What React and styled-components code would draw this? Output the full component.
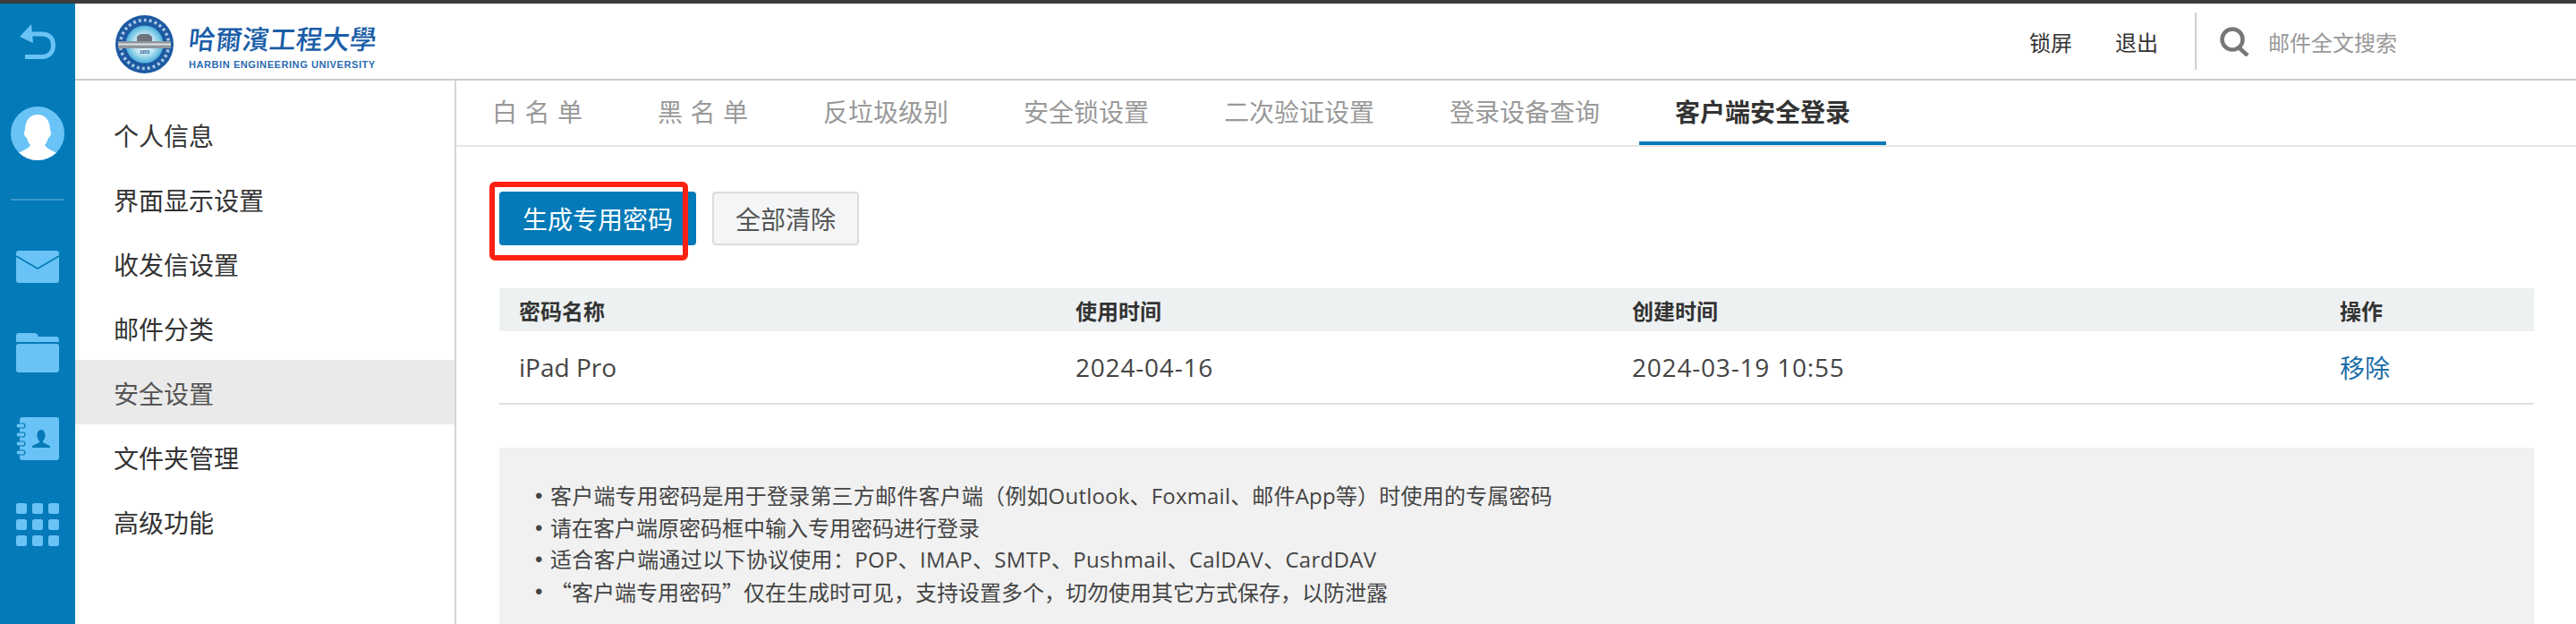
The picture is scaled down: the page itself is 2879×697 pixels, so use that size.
import React from 'react';
import styled, { createGlobalStyle } from 'styled-components';

const GlobalStyle = createGlobalStyle`
html, body { margin: 0; padding: 0; background: #fff; overflow: hidden; }
body { font-family: "Open Sans", "Noto Sans CJK SC", sans-serif; }
* { box-sizing: border-box; }
`;

const Page = styled.div`
height: 697px;
width: 2879px;
border-top: 4px solid #3c3c3c;
display: flex;
overflow: hidden;
`;

const Rail = styled.div`
width: 84px;
background: #047ab8;
flex: none;
display: flex;
flex-direction: column;
align-items: center;
`;

const Avatar = styled.div`
margin-top: 53px;
width: 60px;
height: 60px;
border-radius: 50%;
overflow: hidden;
line-height: 0;
`;

const RailLine = styled.div`
margin-top: 43px;
width: 60px;
height: 2px;
background: #3d97c9;
`;

const RailIcon = styled.div`
margin-top: ${(p) => p.$top}px;
line-height: 0;
`;

const Main = styled.div`
flex: 1;
display: flex;
flex-direction: column;
min-width: 0;
`;

const Header = styled.div`
height: 86px;
flex: none;
border-bottom: 2px solid #cccccc;
display: flex;
align-items: center;
padding-left: 45px;
`;

const Logo = styled.div`
display: flex;
align-items: center;
gap: 17px;
flex: 1;
margin-top: 6px;
line-height: 0;
`;

const LogoText = styled.div`
display: flex;
flex-direction: column;
gap: 2px;
color: #1a5da8;
`;

const LogoName = styled.div`
font-family: "Noto Sans CJK TC", sans-serif;
font-size: 30px;
font-weight: 500;
line-height: 44px;
white-space: nowrap;
transform: skewX(-6deg);
`;

const LogoSub = styled.div`
font-family: "Liberation Sans", sans-serif;
font-weight: 700;
font-size: 11px;
line-height: 12px;
letter-spacing: 0.58px;
white-space: nowrap;
color: #2a6ab0;
`;

const HeaderLinks = styled.div`
display: flex;
gap: 48px;
margin-right: 41px;
`;

const HeaderLink = styled.div`
font-family: "Noto Sans CJK SC", sans-serif;
font-size: 24px;
color: #333;
`;

const SearchBox = styled.div`
height: 64px;
width: 426px;
border-left: 2px solid #ccd0d3;
display: flex;
align-items: center;
padding-left: 26px;
gap: 20px;
font-family: "Noto Sans CJK SC", sans-serif;
font-size: 24px;
color: #999;
`;

const Content = styled.div`
flex: 1;
display: flex;
min-height: 0;
`;

const Menu = styled.div`
width: 426px;
flex: none;
border-right: 2px solid #d6d6d6;
padding-top: 24px;
`;

const MenuItem = styled.div`
height: 72px;
padding: 2px 0 0 43px;
display: flex;
align-items: center;
font-family: "Noto Sans CJK SC", sans-serif;
font-size: 28px;
color: ${(p) => (p.$active ? '#555' : '#333')};
background: ${(p) => (p.$active ? '#eaeaea' : 'transparent')};
`;

const Panel = styled.div`
flex: 1;
min-width: 0;
`;

const Tabs = styled.div`
height: 74px;
border-bottom: 2px solid #e6e6e6;
display: flex;
gap: 4px;
`;

const Tab = styled.div`
height: 72px;
padding: 0 40px;
margin-right: ${(p) => -(p.$spread || 0)}px;
display: flex;
align-items: center;
font-family: "Noto Sans CJK SC", sans-serif;
font-size: 28px;
letter-spacing: ${(p) => p.$spread || 0}px;
font-weight: ${(p) => (p.$active ? 700 : 400)};
color: ${(p) => (p.$active ? '#333' : '#999')};
border-bottom: 4px solid ${(p) => (p.$active ? '#047ab8' : 'transparent')};
white-space: nowrap;
`;

const Body = styled.div`
padding: 50px 47px 0 48px;
`;

const Actions = styled.div`
display: flex;
gap: 18px;
`;

const PrimaryWrap = styled.div`
position: relative;
`;

const PrimaryButton = styled.div`
width: 220px;
height: 60px;
background: #047ab8;
border-radius: 4px;
color: #fff;
font-family: "Noto Sans CJK SC", sans-serif;
font-size: 28px;
display: flex;
align-items: center;
justify-content: center;
`;

const RedBox = styled.div`
position: absolute;
left: -11px;
top: -11px;
width: 222px;
height: 88px;
border: 6px solid #ff2014;
border-radius: 6px;
`;

const SecondaryButton = styled.div`
width: 164px;
height: 60px;
background: #f4f5f7;
border: 2px solid #dcdcdc;
border-radius: 4px;
color: #555;
font-family: "Noto Sans CJK SC", sans-serif;
font-size: 28px;
display: flex;
align-items: center;
justify-content: center;
`;

const Table = styled.div`
margin-top: 48px;
`;

const Row = styled.div`
display: grid;
grid-template-columns: 622px 622px 791px 1fr;
align-items: center;
padding-left: 22px;
height: ${(p) => p.$h}px;
background: ${(p) => p.$bg || 'transparent'};
border-bottom: ${(p) => (p.$line ? '2px solid #dcdfe1' : 'none')};
`;

const HeadCell = styled.div`
font-family: "Noto Sans CJK SC", sans-serif;
font-size: 24px;
font-weight: 700;
color: #333;
`;

const Cell = styled.div`
font-family: "Open Sans", "Noto Sans CJK SC", sans-serif;
font-size: 28px;
letter-spacing: ${(p) => p.$spread || 0}px;
color: ${(p) => p.$color || '#444'};
`;

const Notice = styled.div`
margin-top: 48px;
height: 197px;
background: #f1f1f1;
padding: 36px 0 0 40px;
`;

const NoticeLine = styled.div`
display: flex;
font-family: ${(p) => (p.$cjk ? '"Noto Sans CJK SC"' : '"Open Sans", "Noto Sans CJK SC"')}, sans-serif;
font-size: 24px;
line-height: 35.5px;
letter-spacing: ${(p) => p.$spread || 0}px;
color: #444;
white-space: nowrap;
`;

const Bullet = styled.span`
width: 17px;
flex: none;
font-family: "Liberation Sans", sans-serif;
`;

const railBlue = '#6ac3f6';
const railBack = '#047ab8';

const BackIcon = () => (
  <svg width="40" height="39" viewBox="0 0 40 39">
    <path d="M13 11 H25 C33 11 37.5 16 37.5 23.5 C37.5 31 33 36.5 25 36.5 H6" fill="none" stroke={railBlue} strokeWidth="5" />
    <path d="M13 0 L0 14 L15 21 Z" fill={railBlue} />
  </svg>
);

const AvatarIcon = () => (
  <svg width="60" height="60" viewBox="0 0 60 60">
    <rect width="60" height="60" fill={railBlue} />
    <path d="M30 9 C21 9 16 16 16 26 C14 30 15 33 18 35 C19 39 20 41 22 43 C20 47 14 49 8 52 L14 60 L46 60 L52 52 C46 49 40 47 38 43 C40 41 41 38 42 35 C45 33 46 30 44 26 C44 16 39 9 30 9 Z" fill="#fff" />
  </svg>
);

const MailIcon = () => (
  <svg width="48" height="36" viewBox="0 0 48 36">
    <rect width="48" height="36" rx="3" fill={railBlue} />
    <path d="M0 6 L24 20 L48 6" fill="none" stroke={railBack} strokeWidth="1.6" />
  </svg>
);

const FolderIcon = () => (
  <svg width="48" height="44" viewBox="0 0 48 44">
    <path d="M0 10 V3 C0 1 1 0 3 0 H21 C23 0 24 2 25 4 H45 C47 4 48 6 48 9 V10 Z" fill={railBlue} />
    <rect y="12" width="48" height="32" rx="3" fill={railBlue} />
  </svg>
);

const ContactsIcon = () => (
  <svg width="48" height="48" viewBox="0 0 48 48">
    <rect x="4" width="44" height="48" rx="3" fill={railBlue} />
    {[7, 17, 27, 37].map((y) => (
      <rect key={y} x="0" y={y} width="10" height="5" rx="2.5" fill={railBlue} stroke={railBack} strokeWidth="1.2" />
    ))}
    <path d="M28 14 C25 14 23.5 17 23.5 20 C23.5 23 24.5 25 26 26.5 V28 C24 30 19 30 18 33 V34 H38 V33 C37 30 32 30 30 28 V26.5 C31.5 25 32.5 23 32.5 20 C32.5 17 31 14 28 14 Z" fill={railBack} />
  </svg>
);

const AppsIcon = () => (
  <svg width="48" height="48" viewBox="0 0 48 48">
    {[0, 18, 36].map((y) =>
      [0, 18, 36].map((x) => (
        <rect key={`${x}-${y}`} x={x} y={y} width="12" height="12" rx="2.5" fill={railBlue} />
      ))
    )}
  </svg>
);

const SealIcon = () => (
  <svg width="65" height="65" viewBox="0 0 65 65">
    <defs>
      <radialGradient id="sealCore">
        <stop offset="0" stopColor="#ffffff" />
        <stop offset="0.55" stopColor="#bfe6f2" />
        <stop offset="1" stopColor="#4db4dc" />
      </radialGradient>
    </defs>
    <circle cx="32.5" cy="32.5" r="32.5" fill="#1d5aa2" />
    <circle cx="32.5" cy="32.5" r="27" fill="none" stroke="#a9c6e4" strokeWidth="3.5" strokeDasharray="3 3" />
    <circle cx="32.5" cy="32.5" r="21" fill="url(#sealCore)" />
    <path d="M24 29 V24 L28 21 H37 L41 24 V29 Z" fill="#6d7480" />
    <rect x="3" y="29" width="59" height="8" fill="#8f969d" />
    <rect x="3" y="31.5" width="59" height="2" fill="#dfe3e6" />
    <text x="32.5" y="43" fontFamily="Liberation Sans, sans-serif" fontSize="5" fontWeight="700" fill="#1d4f8f" textAnchor="middle">1953</text>
  </svg>
);

const SearchIcon = () => (
  <svg width="34" height="33" viewBox="0 0 34 33">
    <circle cx="14" cy="14" r="11.5" fill="none" stroke="#777" strokeWidth="4.5" />
    <path d="M21 23 L31 32" stroke="#777" strokeWidth="4.5" />
  </svg>
);

const menuItems = ['个人信息', '界面显示设置', '收发信设置', '邮件分类', '安全设置', '文件夹管理', '高级功能'];

const notices = [
  { text: '客户端专用密码是用于登录第三方邮件客户端（例如Outlook、Foxmail、邮件App等）时使用的专属密码', spread: 0.2 },
  { text: '请在客户端原密码框中输入专用密码进行登录' },
  { text: '适合客户端通过以下协议使用：POP、IMAP、SMTP、Pushmail、CalDAV、CardDAV', spread: 0.3 },
  { text: '“客户端专用密码”仅在生成时可见，支持设置多个，切勿使用其它方式保存，以防泄露', cjk: true },
];

export default function App() {
  return (
    <>
      <GlobalStyle />
      <Page>
        <Rail>
          <RailIcon $top={23}><BackIcon /></RailIcon>
          <Avatar><AvatarIcon /></Avatar>
          <RailLine />
          <RailIcon $top={56}><MailIcon /></RailIcon>
          <RailIcon $top={56}><FolderIcon /></RailIcon>
          <RailIcon $top={50}><ContactsIcon /></RailIcon>
          <RailIcon $top={48}><AppsIcon /></RailIcon>
        </Rail>
        <Main>
          <Header>
            <Logo>
              <SealIcon />
              <LogoText>
                <LogoName>哈爾濱工程大學</LogoName>
                <LogoSub>HARBIN ENGINEERING UNIVERSITY</LogoSub>
              </LogoText>
            </Logo>
            <HeaderLinks>
              <HeaderLink>锁屏</HeaderLink>
              <HeaderLink>退出</HeaderLink>
            </HeaderLinks>
            <SearchBox>
              <SearchIcon />
              邮件全文搜索
            </SearchBox>
          </Header>
          <Content>
            <Menu>
              {menuItems.map((item) => (
                <MenuItem key={item} $active={item === '安全设置'}>{item}</MenuItem>
              ))}
            </Menu>
            <Panel>
              <Tabs>
                <Tab $spread={8.5}>白名单</Tab>
                <Tab $spread={8.5}>黑名单</Tab>
                <Tab>反垃圾级别</Tab>
                <Tab>安全锁设置</Tab>
                <Tab>二次验证设置</Tab>
                <Tab>登录设备查询</Tab>
                <Tab $active>客户端安全登录</Tab>
              </Tabs>
              <Body>
                <Actions>
                  <PrimaryWrap>
                    <PrimaryButton>生成专用密码</PrimaryButton>
                    <RedBox />
                  </PrimaryWrap>
                  <SecondaryButton>全部清除</SecondaryButton>
                </Actions>
                <Table>
                  <Row $h={48} $bg="#eef1f2">
                    <HeadCell>密码名称</HeadCell>
                    <HeadCell>使用时间</HeadCell>
                    <HeadCell>创建时间</HeadCell>
                    <HeadCell>操作</HeadCell>
                  </Row>
                  <Row $h={82} $line>
                    <Cell>iPad Pro</Cell>
                    <Cell $spread={0.8}>2024-04-16</Cell>
                    <Cell $spread={0.8}>2024-03-19 10:55</Cell>
                    <Cell $color="#1b6ea8">移除</Cell>
                  </Row>
                </Table>
                <Notice>
                  {notices.map((line) => (
                    <NoticeLine key={line.text} $cjk={line.cjk} $spread={line.spread}>
                      <Bullet>•</Bullet>
                      {line.text}
                    </NoticeLine>
                  ))}
                </Notice>
              </Body>
            </Panel>
          </Content>
        </Main>
      </Page>
    </>
  );
}
